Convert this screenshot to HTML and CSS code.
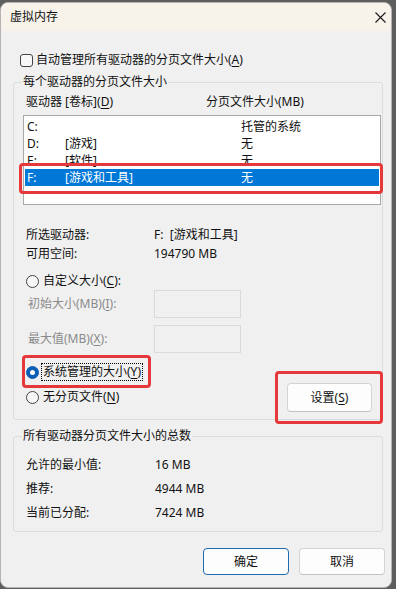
FILE: index.html
```html
<!DOCTYPE html>
<html lang="zh-CN">
<head>
    <meta charset="UTF-8">
    <meta name="viewport" content="width=device-width, initial-scale=1.0">
    <title>虚拟内存</title>
    <link rel="stylesheet" href="styles.css">
</head>
<body>
    <div class="window">
        <div class="titlebar">
            <span class="title">虚拟内存</span>
            <span class="close">
                <svg width="11" height="11" viewBox="0 0 11 11">
                    <path d="M0.5 0.5 L10.5 10.5 M10.5 0.5 L0.5 10.5" stroke="#1a1a1a" stroke-width="1.1" fill="none"/>
                </svg>
            </span>
        </div>

        <div class="content">
            <div class="check-row">
                <span class="checkbox"></span>
                <span>自动管理所有驱动器的分页文件大小(<u>A</u>)</span>
            </div>

            <fieldset class="group group-drives">
                <legend>每个驱动器的分页文件大小</legend>
                <div class="list-head">
                    <span class="head-drive">驱动器 [卷标](<u>D</u>)</span>
                    <span>分页文件大小(MB)</span>
                </div>
                <div class="listbox">
                    <div class="list-row"><span class="c1">C:</span><span class="c2"></span><span>托管的系统</span></div>
                    <div class="list-row"><span class="c1">D:</span><span class="c2">[游戏]</span><span>无</span></div>
                    <div class="list-row"><span class="c1">E:</span><span class="c2">[软件]</span><span>无</span></div>
                    <div class="list-row selected"><span class="c1">F:</span><span class="c2">[游戏和工具]</span><span>无</span></div>
                </div>

                <div class="info">
                    <div class="info-row"><span class="info-label">所选驱动器:</span><span>F:&nbsp;&nbsp;[游戏和工具]</span></div>
                    <div class="info-row"><span class="info-label">可用空间:</span><span>194790 MB</span></div>
                </div>

                <div class="radio-row custom">
                    <span class="radio"></span>
                    <span>自定义大小(<u>C</u>):</span>
                </div>
                <div class="field-row first">
                    <span class="field-label">初始大小(MB)(<u>I</u>):</span>
                    <span class="field-input"></span>
                </div>
                <div class="field-row">
                    <span class="field-label">最大值(MB)(<u>X</u>):</span>
                    <span class="field-input"></span>
                </div>

                <div class="mode-row">
                    <div class="mode-radios">
                        <div class="radio-row">
                            <span class="radio checked"></span>
                            <span class="focus">系统管理的大小(<u>Y</u>)</span>
                        </div>
                        <div class="radio-row">
                            <span class="radio"></span>
                            <span>无分页文件(<u>N</u>)</span>
                        </div>
                    </div>
                    <button class="btn btn-set">设置(<u>S</u>)</button>
                </div>
            </fieldset>

            <fieldset class="group group-total">
                <legend>所有驱动器分页文件大小的总数</legend>
                <div class="total-row"><span class="total-label">允许的最小值:</span><span>16 MB</span></div>
                <div class="total-row"><span class="total-label">推荐:</span><span>4944 MB</span></div>
                <div class="total-row"><span class="total-label">当前已分配:</span><span>7424 MB</span></div>
            </fieldset>

            <div class="dialog-buttons">
                <button class="btn btn-default">确定</button>
                <button class="btn">取消</button>
            </div>
        </div>

        <!-- red annotation frames -->
        <div class="mark mark-row"></div>
        <div class="mark mark-radio"></div>
        <div class="mark mark-button"></div>
    </div>
</body>
</html>
```

FILE: styles.css
```css
body {
    margin: 0;
    background-color: #5e5e5e;
    font-family: "Noto Sans", "Noto Sans CJK SC", sans-serif;
    font-size: 12px;
    line-height: 16px;
    color: #111;
}

u {
    text-decoration-thickness: 1px;
    text-underline-offset: 2px;
}

.window {
    position: relative;
    box-sizing: border-box;
    width: 392px;
    height: 586px;
    margin-top: 2px;
    background-color: #f0f0f0;
    border: 1px solid #b4b4b4;
    border-radius: 8px;
    overflow: hidden;
}

.titlebar {
    height: 28px;
    display: flex;
    align-items: center;
    justify-content: space-between;
    padding: 0 0 0 9px;
    background-color: #f7f3ea;
}

.close {
    display: flex;
    width: 22px;
    justify-content: center;
}

.content {
    padding: 20px 8px 0 12px;
}

.check-row {
    display: flex;
    align-items: center;
    gap: 3px;
    height: 18px;
    padding-left: 7px;
}

.checkbox {
    width: 11px;
    height: 11px;
    border: 1px solid #444;
    border-radius: 3px;
    background-color: #f8f8f8;
}

/* group boxes */
.group {
    margin: 0;
    border: 1px solid #dcdcdc;
    border-radius: 3px;
}

.group legend {
    padding: 0 1px;
    margin-left: -4px;
    line-height: 16px;
}

.group-drives {
    margin-top: 5px;
    padding: 3px 1px 7px 12px;
}

.list-head {
    display: flex;
    height: 18px;
    align-items: center;
}

.head-drive {
    width: 180px;
}

.listbox {
    box-sizing: border-box;
    width: 358px;
    height: 90px;
    margin: 4px 0 0 -3px;
    padding-top: 2px;
    background-color: #fff;
    border: 1px solid #a8a8a8;
}

.list-row {
    display: flex;
    align-items: center;
    height: 17px;
    margin: 0 1px;
    padding-left: 2px;
}

.list-row .c1 {
    width: 38px;
}

.list-row .c2 {
    width: 176px;
}

.list-row.selected {
    background-color: #0078d7;
    color: #fff;
}

.info {
    margin-top: 20px;
}

.info-row, .total-row {
    display: flex;
    align-items: center;
    height: 19px;
}

.info-label {
    width: 128px;
}

.radio-row {
    display: flex;
    align-items: center;
    gap: 4px;
    height: 18px;
}

.radio-row.custom {
    margin-top: 9px;
}

.radio {
    box-sizing: border-box;
    width: 13px;
    height: 13px;
    border: 1px solid #444;
    border-radius: 50%;
    background-color: #f6f6f6;
    display: flex;
    align-items: center;
    justify-content: center;
}

.radio.checked {
    border-color: #0a5fb4;
    background-color: #0a5fb4;
}

.radio.checked::after {
    content: "";
    width: 5px;
    height: 5px;
    border-radius: 50%;
    background-color: #fff;
}

.focus {
    outline: 1px dotted #000;
    padding: 0 1px;
    margin-left: -1px;
}

.field-row {
    display: flex;
    align-items: center;
    margin-top: 7px;
    color: #8a8a8a;
}

.field-row.first {
    margin-top: 0;
}

.field-label {
    box-sizing: border-box;
    width: 128px;
    padding-left: 2px;
}

.field-input {
    box-sizing: border-box;
    width: 87px;
    height: 28px;
    border: 1px solid #dadada;
    background-color: #f0f0f0;
}

.mode-row {
    display: flex;
    justify-content: space-between;
    align-items: flex-start;
    margin-top: 10px;
}

.mode-radios {
    display: flex;
    flex-direction: column;
    gap: 7px;
}

/* buttons */
.btn {
    box-sizing: border-box;
    height: 27px;
    font: inherit;
    color: #111;
    background-color: #fdfdfd;
    border: 1px solid #d4d4d4;
    border-bottom-color: #c2c2c2;
    border-radius: 4px;
    padding: 0;
}

.btn-set {
    width: 85px;
    height: 29px;
    margin: 20px 9px 0 0;
}

.group-total {
    margin-top: 8px;
    padding: 9px 0 6px 12px;
}

.total-row {
    height: 24px;
}

.total-label {
    width: 129px;
}

.dialog-buttons {
    display: flex;
    justify-content: flex-end;
    gap: 10px;
    margin: 16px -2px 0 0;
}

.dialog-buttons .btn {
    width: 86px;
}

.btn-default {
    border: 1px solid #1e6cb0;
}

/* annotation frames drawn over the dialog */
.mark {
    position: absolute;
    box-sizing: border-box;
    border: 3px solid #e5383b;
    border-radius: 4px;
}

.mark-row {
    left: 18px;
    top: 160px;
    width: 364px;
    height: 31px;
}

.mark-radio {
    left: 21px;
    top: 352px;
    width: 129px;
    height: 33px;
}

.mark-button {
    left: 274px;
    top: 368px;
    width: 108px;
    height: 53px;
}
```
